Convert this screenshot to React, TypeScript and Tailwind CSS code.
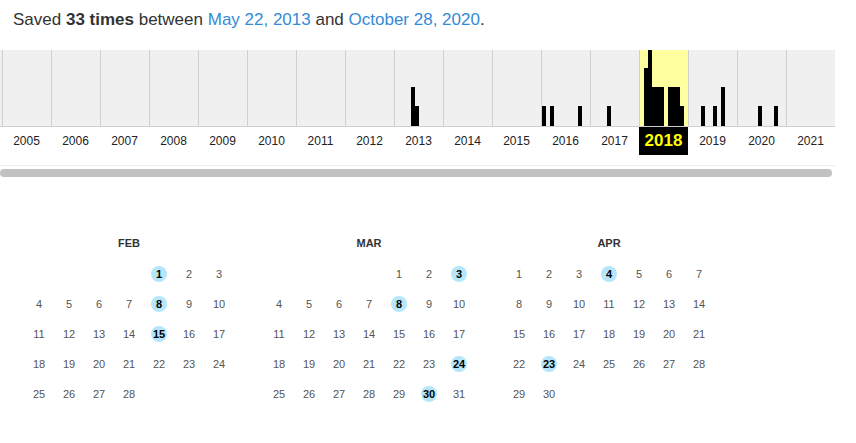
import React from 'react';

// Saves per month: [month index, count]
const YEARS = Array.from({ length: 17 }, (_, i) => 2005 + i);
const ACTIVE_YEAR = 2018;

const bars: Record<number, [number, number][]> = {
  2013: [[4, 2], [5, 1]],
  2016: [[0, 1], [2, 1], [9, 1]],
  2017: [[4, 1]],
  2018: [[1, 3], [2, 4], [3, 2], [4, 2], [5, 2], [7, 2], [8, 2], [9, 2], [10, 1]],
  2019: [[3, 1], [6, 1], [8, 2]],
  2020: [[5, 1], [9, 1]],
};

const barHeight: Record<number, number> = { 1: 20, 2: 39, 3: 58, 4: 76 };

interface Month {
  name: string;
  offset: number; // weekday of the 1st, Sunday = 0
  days: number;
  saved: number[];
}

const months: Month[] = [
  { name: 'FEB', offset: 4, days: 28, saved: [1, 8, 15] },
  { name: 'MAR', offset: 4, days: 31, saved: [3, 8, 24, 30] },
  { name: 'APR', offset: 0, days: 30, saved: [4, 23] },
];

const YearColumn = ({ year }: { year: number }) => {
  const data = bars[year] || [];
  return (
    <div
      className={`w-[49px] h-full border-l border-[#d0d0d0] ${year === ACTIVE_YEAR ? 'bg-[#ffffa0]' : ''}`}
    >
      <svg width="48" height="76" viewBox="0 0 48 76" className="block">
        {data.map(([m, c]) => (
          <rect key={m} x={m * 4} y={76 - barHeight[c]} width="4" height={barHeight[c]} fill="#000" />
        ))}
      </svg>
    </div>
  );
};

const MonthCalendar = ({ month }: { month: Month }) => {
  const cells: (number | null)[] = [];
  for (let i = 0; i < month.offset; i++) cells.push(null);
  for (let d = 1; d <= month.days; d++) cells.push(d);

  return (
    <div className="w-[210px]">
      <div className="h-[31px] flex items-center justify-center text-[11px] font-bold text-[#333]">
        {month.name}
      </div>
      <div className="grid grid-cols-7">
        {cells.map((d, i) => (
          <div key={i} className="h-[30px] flex items-center justify-center">
            {d !== null &&
              (month.saved.includes(d) ? (
                <span className="w-[16px] h-[16px] rounded-full bg-[#b5e6fa] flex items-center justify-center text-[11px] font-bold text-black">
                  {d}
                </span>
              ) : (
                <span className="text-[11px] text-[#555]">{d}</span>
              ))}
          </div>
        ))}
      </div>
    </div>
  );
};

export default function App() {
  return (
    <div className="w-[856px] h-[443px] bg-white overflow-hidden" style={{ fontFamily: '"Liberation Sans", Arial, sans-serif' }}>
      {/* Header */}
      <div className="h-[50px] pl-[13px] pt-[10px] text-[17px] leading-[20px] text-[#333]">
        Saved <b>33 times</b> between <a className="text-[#348bd6]">May 22, 2013</a> and{' '}
        <a className="text-[#348bd6]">October 28, 2020</a>.
      </div>

      {/* Sparkline */}
      <div className="w-[835px]">
        <div className="h-[77px] bg-[#f0f0f0] border-b border-[#cfcfcf] flex pl-[2px]">
          {YEARS.map(y => (
            <YearColumn key={y} year={y} />
          ))}
        </div>
        <div className="h-[28px] flex pl-[2px]">
          {YEARS.map(y =>
            y === ACTIVE_YEAR ? (
              <div key={y} className="w-[49px] bg-black flex items-center justify-center text-[17px] font-bold text-[#ffff00]">
                {y}
              </div>
            ) : (
              <div key={y} className="w-[49px] flex items-center justify-center text-[12px] text-[#222]">
                {y}
              </div>
            )
          )}
        </div>
      </div>

      {/* Scrollbar */}
      <div className="mt-[10px] w-[835px] border-t border-[#ececec] pt-[3px]">
        <div className="w-[832px] h-[8px] rounded-full bg-[#c1c1c1]" />
      </div>

      {/* Calendars */}
      <div className="mt-[51px] pl-[24px] flex gap-[30px]">
        {months.map(m => (
          <MonthCalendar key={m.name} month={m} />
        ))}
      </div>
    </div>
  );
}
